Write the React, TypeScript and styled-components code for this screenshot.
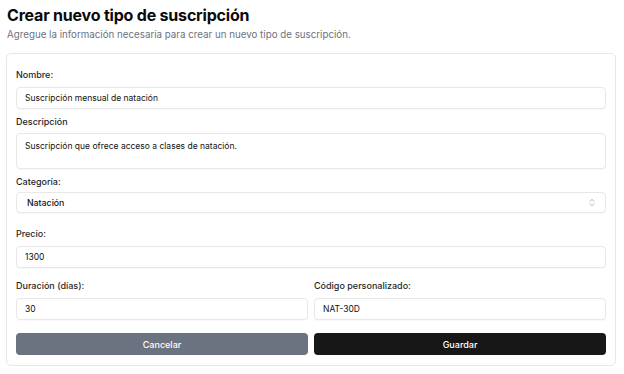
import React from "react";
import styled, { createGlobalStyle } from "styled-components";

const Global = createGlobalStyle`
  html, body { margin: 0; padding: 0; background: #ffffff; }
  body { font-family: Inter, "Noto Sans", sans-serif; color: #0a0a0a; }
  * { box-sizing: border-box; }
`;

const Page = styled.div`
  width: 624px;
  padding: 4px 8px 0 6px;
`;

const Title = styled.h1`
  margin: 0 0 0 1px;
  font-size: 16px;
  line-height: 22px;
  font-weight: 700;
  color: #0a0a0a;
  letter-spacing: -0.2px;
`;

const Subtitle = styled.p`
  margin: 2px 0 0 1px;
  font-size: 9.75px;
  line-height: 14px;
  color: #6b7280;
`;

const Card = styled.form`
  margin-top: 11px;
  border: 1px solid #e7e7e7;
  border-radius: 5px;
  padding: 14px 9px 10px 9px;
  display: flex;
  flex-direction: column;
  background: #fff;
`;

const Field = styled.div<{ $top?: number }>`
  display: flex;
  flex-direction: column;
  margin-top: ${(p) => p.$top ?? 0}px;
  min-width: 0;
`;

const Label = styled.label<{ $gap?: number }>`
  font-size: 9px;
  line-height: 14px;
  font-weight: 500;
  color: #1f1f1f;
  margin-bottom: ${(p) => p.$gap ?? 5}px;
`;

const Input = styled.input`
  display: block;
  height: 22px;
  width: 100%;
  border: 1px solid #e8e8e8;
  border-radius: 4px;
  padding: 0 8px;
  font-family: inherit;
  font-size: 8.5px;
  color: #111;
  background: #fff;
  box-shadow: 0 1px 1px rgba(0, 0, 0, 0.03);
  outline: none;
`;

const TextArea = styled.textarea`
  display: block;
  height: 36px;
  width: 100%;
  border: 1px solid #e8e8e8;
  border-radius: 4px;
  padding: 5px 8px;
  font-family: inherit;
  font-size: 8.5px;
  line-height: 14px;
  color: #111;
  resize: none;
  box-shadow: 0 1px 1px rgba(0, 0, 0, 0.03);
  outline: none;
`;

const SelectWrap = styled.div`
  position: relative;
  display: flex;
  width: 100%;
`;

const Select = styled.select`
  appearance: none;
  -webkit-appearance: none;
  display: block;
  height: 21px;
  width: 100%;
  border: 1px solid #e8e8e8;
  border-radius: 4px;
  padding: 0 10px;
  font-family: inherit;
  font-size: 8.75px;
  font-weight: 500;
  color: #111;
  background: #fff;
  box-shadow: 0 1px 1px rgba(0, 0, 0, 0.03);
  outline: none;
`;

const SelectIcon = styled.svg`
  position: absolute;
  right: 10px;
  top: 6px;
  width: 8px;
  height: 9px;
  pointer-events: none;
`;

const Row = styled.div<{ $top?: number }>`
  display: grid;
  grid-template-columns: 1fr 1fr;
  column-gap: 6px;
  margin-top: ${(p) => p.$top ?? 0}px;
`;

const Button = styled.button<{ $variant: "muted" | "primary" }>`
  height: 22px;
  border: none;
  border-radius: 4px;
  font-family: inherit;
  font-size: 9px;
  font-weight: 500;
  color: #fff;
  background: ${(p) => (p.$variant === "primary" ? "#171717" : "#6b7280")};
  cursor: pointer;
`;

export default function App() {
  return (
    <>
      <Global />
      <Page>
        <Title>Crear nuevo tipo de suscripción</Title>
        <Subtitle>
          Agregue la información necesaria para crear un nuevo tipo de suscripción.
        </Subtitle>
        <Card onSubmit={(e) => e.preventDefault()}>
          <Field>
            <Label>Nombre:</Label>
            <Input defaultValue="Suscripción mensual de natación" />
          </Field>
          <Field $top={6}>
            <Label $gap={4}>Descripción</Label>
            <TextArea defaultValue="Suscripción que ofrece acceso a clases de natación." />
          </Field>
          <Field $top={6}>
            <Label $gap={3}>Categoría:</Label>
            <SelectWrap>
              <Select defaultValue="natacion">
                <option value="natacion">Natación</option>
              </Select>
              <SelectIcon viewBox="0 0 8 10" fill="none" stroke="#9ca3af" strokeWidth="1" strokeLinecap="round" strokeLinejoin="round">
                <path d="M2 3.5 L4 1.5 L6 3.5" />
                <path d="M2 6.5 L4 8.5 L6 6.5" />
              </SelectIcon>
            </SelectWrap>
          </Field>
          <Field $top={14}>
            <Label>Precio:</Label>
            <Input defaultValue="1300" />
          </Field>
          <Row $top={11}>
            <Field>
              <Label>Duración (días):</Label>
              <Input defaultValue="30" />
            </Field>
            <Field>
              <Label>Código personalizado:</Label>
              <Input defaultValue="NAT-30D" />
            </Field>
          </Row>
          <Row $top={13}>
            <Button type="button" $variant="muted">Cancelar</Button>
            <Button type="submit" $variant="primary">Guardar</Button>
          </Row>
        </Card>
      </Page>
    </>
  );
}
